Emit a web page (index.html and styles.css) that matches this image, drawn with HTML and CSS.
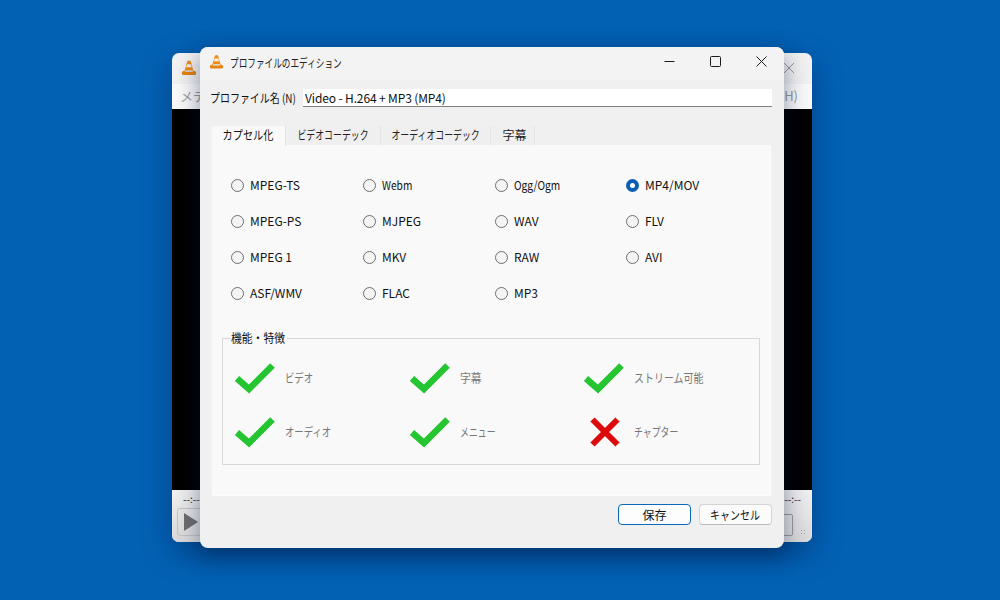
FILE: index.html
```html
<!DOCTYPE html>
<html lang="ja">
<head>
<meta charset="utf-8">
<title>プロファイルのエディション</title>
<link rel="stylesheet" href="styles.css">
</head>
<body>
<svg class="defs" width="0" height="0" aria-hidden="true">
  <defs>
    <symbol id="cone" viewBox="0 0 16 16">
      <path d="M8 .5 9.600 1l3 10.500H3.400L6.400 1z" fill="#f08a12"/>
      <path d="M6.100 4.200h3.800l.9 3.100H5.200z" fill="#f4f1ea"/>
      <path d="M1 12.200c0-1 1.600-1.300 2.400-1.300h9.200c.8 0 2.400.3 2.400 1.300v1.500c0 .7-.6 1.300-1.300 1.300H2.300c-.7 0-1.300-.6-1.300-1.300z" fill="#e8820e"/>
      <path d="M4.500 10.200h7l.6 1.800H3.900z" fill="#d9d3c6"/>
    </symbol>
    <symbol id="check" viewBox="0 0 42 32">
      <path d="M3 16.500 15 27 38.500 3.500" fill="none" stroke="#25c431" stroke-width="6.500"/>
    </symbol>
    <symbol id="cross" viewBox="0 0 30 30">
      <path d="M2.500 2.500 27.500 27.500M27.500 2.500 2.500 27.500" fill="none" stroke="#dc0a0a" stroke-width="6"/>
    </symbol>
  </defs>
</svg>

<section class="player">
  <header class="player-title">
    <svg class="player-cone"><use href="#cone"/></svg>
    <svg class="player-close" viewBox="0 0 14 14"><path d="M1 1 13 13M13 1 1 13" stroke="#8a8a8a" fill="none"/></svg>
  </header>
  <nav class="player-menu"><span>メデ</span><span>ヘルプ(H)</span></nav>
  <div class="player-video"></div>
  <footer class="player-controls">
    <div class="time-row"><span>--:--</span><span>--:--</span></div>
    <div class="button-row">
      <div class="play-button"><span class="play-glyph"></span></div>
      <div class="end-group"><div class="end-button"></div><div class="grip"></div></div>
    </div>
  </footer>
</section>

<section class="dialog">
  <header class="title-bar">
    <svg class="title-cone"><use href="#cone"/></svg>
    <h1 class="title-text"><span class="sx sx72">プロファイルのエディション</span></h1>
    <div class="window-buttons">
      <svg class="win-icon" viewBox="0 0 11 11"><path d="M.5 5.500H10.500" stroke="#1a1a1a" fill="none"/></svg>
      <svg class="win-icon" viewBox="0 0 11 11"><rect x=".5" y=".5" width="10" height="10" rx="1" stroke="#1a1a1a" fill="none"/></svg>
      <svg class="win-icon" viewBox="0 0 11 11"><path d="M.5 .5 10.500 10.500M10.500 .5 .5 10.500" stroke="#1a1a1a" fill="none"/></svg>
    </div>
  </header>

  <div class="name-row">
    <label class="name-label" for="profile"><span class="sx sx83">プロファイル名 (N)</span></label>
    <input class="name-input" id="profile" value="Video - H.264 + MP3 (MP4)">
  </div>

  <div class="tabs">
    <div class="tab tab-active w1"><span class="sx sx85">カプセル化</span></div>
    <div class="tab w2"><span class="sx sx74">ビデオコーデック</span></div>
    <div class="tab w3"><span class="sx sx74">オーディオコーデック</span></div>
    <div class="tab w4"><span>字幕</span></div>
  </div>

  <div class="pane">
    <div class="formats">
      <div class="radio"><i></i><span>MPEG-TS</span></div>
      <div class="radio"><i></i><span class="sx sx85">Webm</span></div>
      <div class="radio"><i></i><span class="sx sx85">Ogg/Ogm</span></div>
      <div class="radio"><i class="on"></i><span>MP4/MOV</span></div>
      <div class="radio"><i></i><span>MPEG-PS</span></div>
      <div class="radio"><i></i><span>MJPEG</span></div>
      <div class="radio"><i></i><span>WAV</span></div>
      <div class="radio"><i></i><span>FLV</span></div>
      <div class="radio"><i></i><span>MPEG 1</span></div>
      <div class="radio"><i></i><span>MKV</span></div>
      <div class="radio"><i></i><span>RAW</span></div>
      <div class="radio"><i></i><span>AVI</span></div>
      <div class="radio"><i></i><span>ASF/WMV</span></div>
      <div class="radio"><i></i><span>FLAC</span></div>
      <div class="radio"><i></i><span>MP3</span></div>
    </div>

    <fieldset class="features">
      <legend><span class="sx sx90">機能・特徴</span></legend>
      <div class="feature"><svg class="mark"><use href="#check"/></svg><span class="sx sx78">ビデオ</span></div>
      <div class="feature"><svg class="mark"><use href="#check"/></svg><span class="sx sx90">字幕</span></div>
      <div class="feature"><svg class="mark"><use href="#check"/></svg><span class="sx sx83">ストリーム可能</span></div>
      <div class="feature"><svg class="mark"><use href="#check"/></svg><span class="sx sx78">オーディオ</span></div>
      <div class="feature"><svg class="mark"><use href="#check"/></svg><span class="sx sx74">メニュー</span></div>
      <div class="feature"><svg class="mark-x"><use href="#cross"/></svg><span class="sx sx74">チャプター</span></div>
    </fieldset>
  </div>

  <footer class="actions">
    <button class="btn btn-primary"><span>保存</span></button>
    <button class="btn"><span class="sx sx83">キャンセル</span></button>
  </footer>
</section>
</body>
</html>
```
FILE: styles.css
```css
* { box-sizing: border-box; }
html, body { height: 100%; }
body {
  margin: 0;
  position: relative;
  overflow: hidden;
  background: #0361b4;
  font-family: "Noto Sans CJK JP", "Liberation Sans", sans-serif;
  font-size: 12px;
  color: #111;
}
.defs { position: absolute; }

/* narrow, MS UI Gothic-like kana */
.sx { display: inline-block; white-space: nowrap; transform-origin: left center; flex: none; }
.sx72 { transform: scaleX(.72); }
.sx74 { transform: scaleX(.74); }
.sx78 { transform: scaleX(.78); }
.sx83 { transform: scaleX(.83); }
.sx85 { transform: scaleX(.85); }
.sx90 { transform: scaleX(.9); }
.tab .sx, .btn .sx { transform-origin: center; }

/* background player window */
.player {
  position: absolute;
  left: 172px;
  top: 53px;
  width: 640px;
  height: 489px;
  display: flex;
  flex-direction: column;
  border-radius: 7px;
  overflow: hidden;
  background: #f1f1f1;
  box-shadow: 0 10px 30px rgba(0, 30, 80, .45);
}
.player-title {
  height: 31px;
  flex: none;
  display: flex;
  justify-content: space-between;
  align-items: center;
  padding: 0 17px 2px 9px;
}
.player-cone { width: 16px; height: 18px; }
.player-close { width: 12px; height: 12px; }
.player-menu {
  height: 25px;
  flex: none;
  background: #f9f9f9;
  display: flex;
  justify-content: space-between;
  align-items: center;
  padding: 0 14px 2px 8px;
  font-size: 13px;
  color: #9a9a9a;
}
.player-video { flex: 1; background: #000; }
.player-controls {
  height: 52px;
  flex: none;
  padding: 3px 5px 4px 5px;
  background: linear-gradient(#f0f0f0, #d9d9d9);
}
.time-row {
  display: flex;
  justify-content: space-between;
  font-size: 10px;
  line-height: 12px;
  color: #222;
  padding: 0 6px 0 6px;
}
.button-row {
  margin-top: 3px;
  display: flex;
  justify-content: space-between;
  align-items: flex-end;
}
.play-button {
  width: 30px;
  height: 28px;
  display: flex;
  align-items: center;
  padding-left: 6px;
  border: 1px solid #c4c4c4;
  border-radius: 3px;
}
.play-glyph {
  width: 0;
  height: 0;
  border-left: 14px solid #6f6f6f;
  border-top: 9px solid transparent;
  border-bottom: 9px solid transparent;
}
.end-group { display: flex; align-items: flex-end; gap: 7px; }
.end-button {
  width: 18px;
  height: 22px;
  border: 1px solid #9a9a9a;
  border-radius: 2px;
}
.grip {
  width: 7px;
  height: 7px;
  background: radial-gradient(circle, #9d9d9d 1px, transparent 1px) 0 0 / 3px 3px;
}

/* dialog */
.dialog {
  position: absolute;
  left: 200px;
  top: 47px;
  width: 584px;
  height: 501px;
  display: flex;
  flex-direction: column;
  padding: 0 12px;
  border-radius: 8px;
  background: #f0f0f0;
  box-shadow: 0 8px 24px rgba(0, 20, 60, .45);
}
.title-bar {
  height: 33px;
  flex: none;
  margin: 0 -12px;
  padding: 0 0 0 9px;
  display: flex;
  align-items: center;
  background: #f3f3f3;
  border-radius: 8px 8px 0 0;
}
.title-cone { width: 15px; height: 16px; margin-top: -4px; flex: none; }
.title-text {
  margin: 0 0 3px 6px;
  font-size: 12px;
  font-weight: 400;
  color: #222;
  flex: 1;
}
.window-buttons { display: flex; margin: 0 17px 5px 0; gap: 35px; }
.win-icon { width: 11px; height: 11px; display: block; }

.name-row {
  margin: 9px 0 0 -2px;
  height: 18px;
  display: flex;
  align-items: center;
  flex: none;
}
.name-label { width: 93px; flex: none; color: #111; white-space: nowrap; padding-bottom: 2px; }
.name-input {
  flex: 1;
  min-width: 0;
  height: 18px;
  border: 0;
  border-bottom: 1px solid #7f7f7f;
  background: #fff;
  font: inherit;
  padding: 0 0 1px 2px;
  color: #111;
  outline: none;
  letter-spacing: -.13px;
}

.tabs {
  display: flex;
  margin-top: 19px;
  height: 19px;
  flex: none;
}
.tab {
  display: flex;
  justify-content: center;
  line-height: 18px;
  background: #efefef;
  border-right: 1px solid #e4e4e4;
  white-space: nowrap;
  color: #222;
}
.tab-active { background: #f9f9f9; color: #111; height: 20px; position: relative; }
.w1 { width: 74px; }
.w2 { width: 95px; }
.w3 { width: 110px; }
.w4 { width: 44px; padding-left: 4px; }

.pane {
  width: 558px;
  height: 350px;
  flex: none;
  background: #f9f9f9;
  box-shadow: 1px 0 0 #fdfdfd, 0 1px 0 #fdfdfd;
  padding: 22px 10px 0 19px;
}
.formats {
  display: grid;
  grid-template-columns: 132px 132px 131px 1fr;
  grid-auto-rows: 36px;
  height: 171px;
}
.radio {
  display: flex;
  align-items: center;
  gap: 6px;
  height: 36px;
  padding-bottom: 2px;
  color: #111;
  white-space: nowrap;
}
.radio i {
  width: 13px;
  height: 13px;
  flex: none;
  margin-top: 2px;
  border-radius: 50%;
  border: 1px solid #6f6f6f;
  background: #f4f4f4;
}
.radio i.on {
  border: 4px solid #0a5fb4;
  background: #fff;
}

.features {
  position: relative;
  margin: 0 0 0 -9px;
  padding: 12px 0 0 11px;
  width: 538px;
  height: 127px;
  min-width: 0;
  border: 1px solid #d8d8d8;
  display: grid;
  grid-template-columns: 175px 174px 1fr;
  grid-template-rows: 54px 54px;
  align-content: start;
}
.features legend {
  position: absolute;
  top: -9px;
  left: 8px;
  padding: 0;
  width: 56px;
  line-height: 16px;
  background: #f9f9f9;
  color: #111;
}
.feature {
  display: flex;
  align-items: center;
  color: #777;
  white-space: nowrap;
}
.feature .sx { margin-bottom: 2px; }
.mark { width: 42px; height: 32px; margin-right: 9px; flex: none; }
.mark-x { width: 30px; height: 30px; margin: 0 14px 0 7px; flex: none; }

.actions {
  display: flex;
  justify-content: flex-end;
  gap: 8px;
  margin-top: 9px;
  flex: none;
}
.btn {
  width: 73px;
  height: 21px;
  padding: 0 0 1px;
  display: flex;
  justify-content: center;
  align-items: center;
  border: 1px solid #d4d4d4;
  border-bottom-color: #b8b8b8;
  border-radius: 4px;
  background: #fbfbfb;
  font: inherit;
  color: #111;
}
.btn-primary { border: 1px solid #0a6ab8; background: #fdfdfd; }
```
